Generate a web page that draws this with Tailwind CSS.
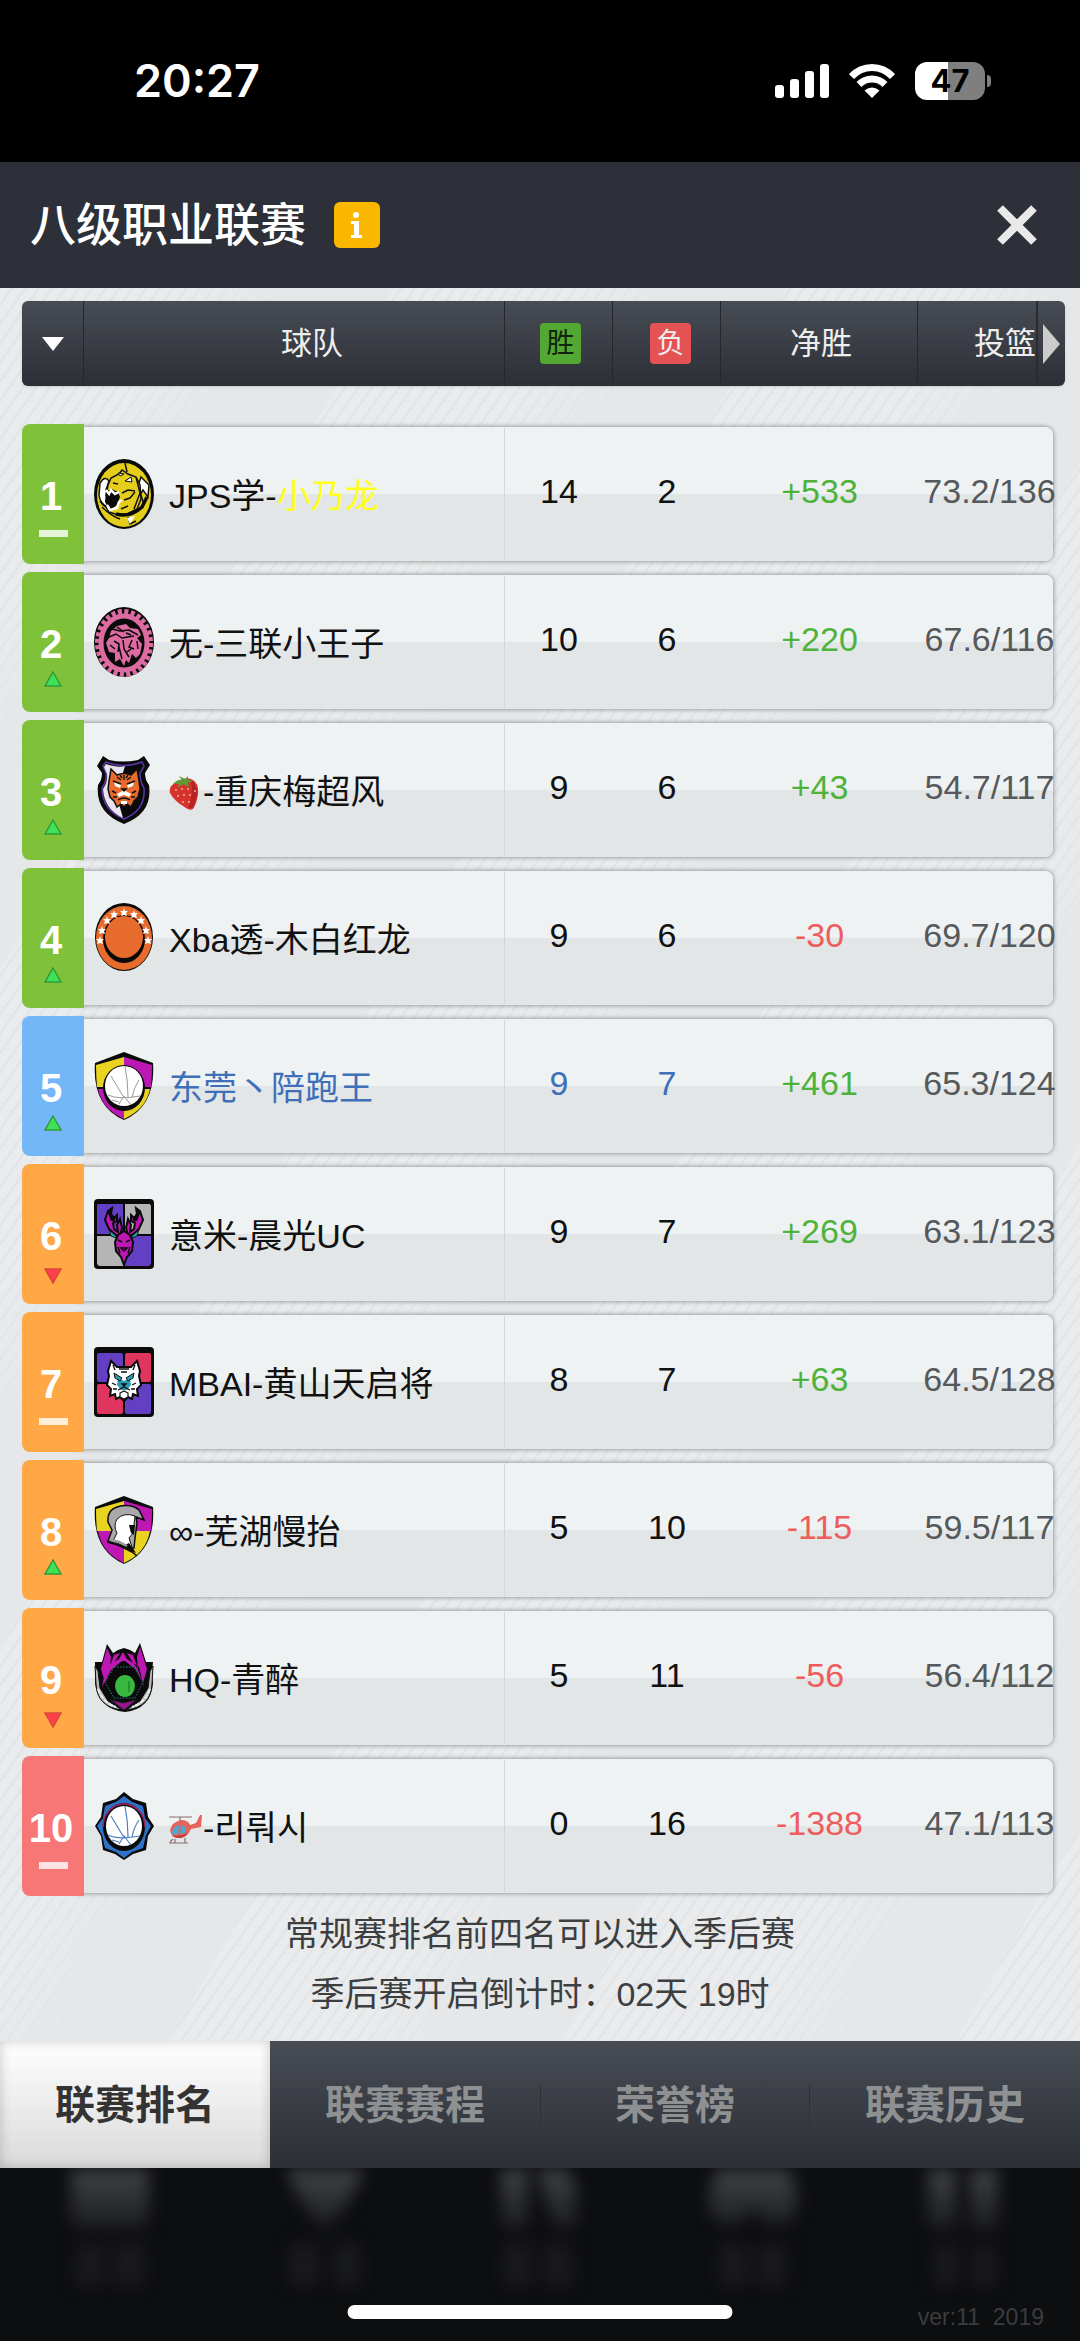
<!DOCTYPE html>
<html lang="zh-CN">
<head>
    <meta charset="UTF-8">
    <meta name="viewport" content="width=device-width, initial-scale=1.0">
    <script src="https://cdn.jsdelivr.net/npm/@tailwindcss/browser@4"></script>
    <title>八级职业联赛</title>
</head>
<body class="bg-black font-['Liberation_Sans','Noto_Sans_CJK_SC','Noto_Sans_CJK_KR',sans-serif]">

    <!-- Team logos -->
    <svg class="hidden" aria-hidden="true">
        <symbol id="logo-1" viewBox="0 0 60 70">
            <ellipse cx="30" cy="35" rx="30" ry="35" fill="#0a0a0a"/>
            <ellipse cx="30" cy="36" rx="27" ry="32" fill="#e5cd1c"/>
            <path d="M6 24q5-8 9-2l-3 9 5 9-3 8q-8-3-9-12z" fill="#fff" stroke="#111" stroke-width="1.5"/>
            <path d="M47 18l8 8-1 12-5-7-3 5-2-9z" fill="#fff" stroke="#111" stroke-width="1.5"/>
            <path d="M14 26l3-7 8-4 3-4 6 4 8 3 4 8 1 14-4 10-10 5-9 1-9-3-3-5 4-6-4-6z" fill="#e5cd1c" stroke="#111" stroke-width="1.5"/>
            <path d="M12 32l6-2 6 3 2 5-3 8-7 5-5-8z" fill="#0a0a0a"/>
            <path d="M12 31l3 4 2-4 4 4 4-2M13 46l3 5 7-2 2-6 3-2" fill="none" stroke="#fff" stroke-width="2.5"/>
            <path d="M28 34l6-3 7 1M30 41l6-2 5-6M42 18l4 16-6 16M31 4l2 9M47 36l3 10M24 25l-5-1M27 50l7-3" fill="none" stroke="#111" stroke-width="1.5"/>
            <path d="M31 22l6-4 1 5z M24 14l6 1-4 2z" fill="#fff" stroke="#111"/>
            <path d="M22 55q14 4 26-7l5-10" fill="none" stroke="#0a0a0a" stroke-width="3.5"/>
            <path d="M8 48q9 9 18 12M6 42q2 4 6 6M34 58l2 7 6-3" fill="none" stroke="#111" stroke-width="1.5"/>
            <path d="M33 59l8-2-5 8z" fill="#fff"/>
        </symbol>
        <symbol id="logo-2" viewBox="0 0 60 70">
            <ellipse cx="30" cy="35" rx="30" ry="35" fill="#0a0a0a"/>
            <ellipse cx="30" cy="36" rx="26" ry="31" fill="none" stroke="#dc6ba2" stroke-width="6" stroke-dasharray="4 2.4"/>
            <ellipse cx="30" cy="36" rx="23" ry="27" fill="none" stroke="#dc6ba2" stroke-width="5"/>
            <path d="M17 24l6-5 9-2 4 4 8 1 3 6-4 3 5 6-2 10-4 4-4-4-3 9-3-3-2 6-4-7-5 3 0-9-6-1-3-9 3-5z" fill="#dc6ba2"/>
            <path d="M18 22l8 2 9-1 9 5M15 30l7-3 6 4 12-2M20 34l5 3-1 8M29 33l1 9 5 8M25 40l3 12M38 33l-3 7 5 2M43 34l1 8M32 26l5 2M23 20l7 5M16 38l5 4M33 45l4-3" fill="none" stroke="#0a0a0a" stroke-width="1.5"/>
        </symbol>
        <symbol id="logo-3" viewBox="0 0 60 70">
            <path d="M9 1l6 4q14 3 29 0l6-4 6 9-5 8q0 7 4 12 4 28-25 39Q1 58 4 30q4-5 4-12l-5-7z" fill="#0a0a0a"/>
            <path d="M12 7q17 7 36 0l2 4-4 7q0 9 4 15 2 22-20 31Q8 55 8 33q5-7 4-15l-3-7z" fill="#0a0a0a" stroke="#5a36a8" stroke-width="1.5"/>
            <path d="M12 9q12 4 19 2l-3 10 3 22-6 6 4 14Q10 54 9 34q5-7 4-15l-3-7z" fill="#e8e4ef"/>
            <path d="M17 14l6 6q7-3 14 0l6-6 2 12 1 8-2 8-4 4-3 6-4-3-3 3-3-3-4 3-3-6-4-4-2-8 1-8z" fill="#e66b2c" stroke="#111" stroke-width="1.5"/>
            <path d="M20 27l7 3-1 3-5-2zM40 27l-7 3 1 3 5-2z" fill="#fff"/>
            <path d="M23 39l7-4 7 4-2 3-5-2-5 2zM27 46h6v3h-6z" fill="#fff"/>
            <path d="M28 34h4l-2 2zM18 36l4 2M42 36l-4 2M19 42l4 0M41 42l-4 0M23 22l4 3M37 22l-4 3M30 20v5M24 45q6-4 12 0M19 26l8 3M41 26l-8 3M26 20l2 3M34 20l-2 3" fill="none" stroke="#111" stroke-width="1.4"/>
        </symbol>
        <symbol id="logo-4" viewBox="0 0 60 70">
            <ellipse cx="30" cy="34" rx="29" ry="34" fill="#0a0a0a"/>
            <ellipse cx="30" cy="35" rx="28" ry="32" fill="#e66b2c"/>
            <ellipse cx="30" cy="36" rx="21" ry="24" fill="#0a0a0a"/>
            <ellipse cx="30" cy="34" rx="19" ry="21" fill="#e66b2c"/>
            <g fill="#fff">
                <path id="star" d="M20 7l1 3h3l-2 2 1 3-3-1-3 1 1-3-2-2h3z"/>
                <use href="#star" x="10" y="-2"/>
                <use href="#star" x="20"/><use href="#star" x="-7" y="6"/><use href="#star" x="27" y="6"/>
                <use href="#star" x="-12" y="16"/><use href="#star" x="32" y="16"/>
                <use href="#star" x="-14" y="26"/><use href="#star" x="34" y="26"/>
            </g>
        </symbol>
        <symbol id="logo-5" viewBox="0 0 60 70">
            <path d="M30 1l29 11q3 43-29 57Q-2 55 1 12z" fill="#0a0a0a"/>
            <path d="M30 6v30H3Q2 25 2 14z" fill="#e8d320"/>
            <path d="M30 6v30h27q1-11 1-22z" fill="#bd17b4"/>
            <path d="M4 38h26v30Q8 58 4 38" fill="#bd17b4"/>
            <path d="M56 38H30v30q22-10 26-30" fill="#e8d320"/>
            <ellipse cx="30" cy="37" rx="21" ry="23" fill="#0a0a0a"/>
            <ellipse cx="30" cy="35" rx="19" ry="20" fill="#fff"/>
            <path d="M31 15q3 15 3 31M17 25l12 20M45 29q-5 7-7 17M14 44q10 5 32 1M25 53l5-8 7 9M18 49l7 2" fill="none" stroke="#999"/>
        </symbol>
        <symbol id="logo-6" viewBox="0 0 60 70">
            <rect width="60" height="70" rx="4" fill="#0a0a0a"/>
            <path d="M4 5h25v30H3V6zM31 37h26v28l-2 2H31z" fill="#633fc4"/>
            <path d="M31 5h25l1 2v28H31zM3 37h26v30H5l-2-2z" fill="#b5b5b5"/>
            <path d="M15 30l8 4-1 5-5-2zM45 30l-8 4 1 5 5-2z" fill="#1fb0b5" stroke="#111"/>
            <path d="M24 38l-9-8-4-9 3-9 4-3-1 6 3 4 3-3v6l-4 2 1 6 4 3-1-7 3-6 2 9-1 4 3 2 3-2-1-4 2-9 3 6-1 7 4-3 1-6-4-2v-6l3 3 3-4-1-6 4 3 3 9-4 9-9 8" fill="#bd17b4" stroke="#0a0a0a" stroke-width="2"/>
            <path d="M15 11l3 9 3 1M45 11l-3 9-3 1" fill="none" stroke="#0a0a0a" stroke-width="3.500"/>
            <path d="M24 36l6-4 6 4 3 7-1 9-5 6-3 8-3-8-5-6-1-9z" fill="#bd17b4" stroke="#0a0a0a" stroke-width="2"/>
            <path d="M24 41l4 2M36 41l-4 2M27 49h6l-3 3zM24 48l2 6M36 48l-2 6" fill="none" stroke="#0a0a0a" stroke-width="1.5"/>
        </symbol>
        <symbol id="logo-7" viewBox="0 0 60 70">
            <rect width="60" height="70" rx="4" fill="#0a0a0a"/>
            <rect x="3" y="6" width="26" height="29" rx="2" fill="#633fc4"/>
            <rect x="31" y="37" width="26" height="30" rx="2" fill="#633fc4"/>
            <rect x="31" y="6" width="26" height="29" rx="2" fill="#e0355f"/>
            <rect x="3" y="37" width="26" height="30" rx="2" fill="#e0355f"/>
            <path d="M17 14l6 6h14l6-6 3 10-1 5 2 9-4 4 1 7-5-2-1 5-4-2-4 4-4-4-4 2-1-5-5 2 1-7-4-4 2-9-1-5z" fill="#fff" stroke="#0a0a0a" stroke-width="2"/>
            <path d="M24 31l6 3 6-3 1 7-4 5h-6l-4-5z" fill="#2a9bb3"/>
            <path d="M20 26l8 5-2 3-5-3zM40 26l-8 5 2 3 5-3z" fill="#2a9bb3" stroke="#111"/>
            <path d="M26 46l4-2 4 2v4l-4 2-4-2z" fill="#fff" stroke="#111" stroke-width="1.200"/>
            <path d="M24 43l6-3 6 3M18 36l4 2M42 36l-4 2M19 42l4 0M41 42l-4 0M25 22h10M27 25h6M19 18l2 5M41 18l-2 5M28 37h4l-2 2z" fill="none" stroke="#111" stroke-width="1.3"/>
        </symbol>
        <symbol id="logo-8" viewBox="0 0 60 70">
            <path d="M30 1l29 11q3 43-29 57Q-2 55 1 12z" fill="#0a0a0a"/>
            <path d="M30 6v30H3Q2 25 2 14z" fill="#e8d320"/>
            <path d="M30 6v30h27q1-11 1-22z" fill="#bd17b4"/>
            <path d="M4 36h26v32Q8 58 4 36" fill="#bd17b4"/>
            <path d="M56 36H30v32q22-10 26-32" fill="#e8d320"/>
            <path d="M50 25l-8-3 1 6-2 15-1 10-4 1-22-8 4-11-4-8q-1-12 9-15 14-4 22 3z" fill="#a9a9a9" stroke="#0a0a0a" stroke-width="1.5"/>
            <path d="M41 21q-11-4-18 3-4 7 0 14l-4 8 13 6 7 3-4-12 4-5z" fill="#fff" stroke="#111"/>
            <path d="M35 30h6l-1 10-3-2zM35 48l7 10-5-2-8-5z" fill="#0a0a0a"/>
            <path d="M13 47l11 3 14 7 5 4" fill="none" stroke="#0a0a0a" stroke-width="1.5"/>
            <path d="M17 45l8 2 8 4" fill="none" stroke="#999" stroke-width="2.5"/>
        </symbol>
        <symbol id="logo-9" viewBox="0 0 60 70">
            <path d="M1 19l7 0 5-18 6 9 5-3 6-2 6 2 5 3 5-10 6 19 7 0-1 11 1 10q-2 26-28 29Q4 66 1 40z" fill="#0a0a0a"/>
            <path d="M13 5l4 9-1 13-5 13-4-14zM46 4l-3 10 1 13 5 13 4-14zM29 9l4 7 12 8 5 20-8-17-11-9h-3l-11 9-9 17 4-20 13-8zM20 12l6-2-6 10-5 6zM39 12l-6-2 6 10 5 6z" fill="#bd17b4"/>
            <path d="M4 28l2 17 8 13 14 9Q3 64 2 41l-1-18zM56 28l-2 17-8 13-14 9Q57 64 58 41l1-18z" fill="#b9b9b9" stroke="#111"/>
            <path d="M4 46q5 14 18 18M56 46q-5 14-18 18" fill="none" stroke="#eee" stroke-width="2" stroke-dasharray="5 1"/>
            <path d="M20 24h20l9 15-8 16H20l-9-16z" fill="#0a0a0a" stroke="#24898a" stroke-dasharray="1.5 1.5"/>
            <ellipse cx="31" cy="43" rx="10" ry="11" fill="#38b83f"/>
            <path d="M35 38v11" stroke="#1d6b25"/>
            <path d="M17 57l12 3 13-3-12 10z" fill="#9b1593" stroke="#222"/>
        </symbol>
        <symbol id="logo-10" viewBox="0 0 60 70">
            <path d="M30 1l9 7 13 4 2 14 6 9-6 10-2 14-13 4-9 6-9-6-12-4-2-14-6-10 6-9 2-14 13-4z" fill="#0a0a0a"/>
            <path d="M30 5l8 6 11 4 2 12 6 8-5 9-3 13-11 4-8 6-8-6-11-4-3-13-5-9 6-8 2-12 11-4z" fill="#2f72c9"/>
            <ellipse cx="30" cy="36" rx="21" ry="24" fill="#0a0a0a"/>
            <path d="M9 36a21 23 0 0 1 42 0" fill="none" stroke="#9c2560" stroke-width="1.500"/>
            <ellipse cx="30" cy="35" rx="18" ry="20" fill="#fff"/>
            <path d="M31 15q3 15 3 31M17 25l12 20M45 29q-5 7-7 17M14 44q10 5 32 1M25 53l5-8 7 9M18 49l7 2" fill="none" stroke="#4d7fc2" stroke-width="1.2"/>
        </symbol>
        <symbol id="strawberry" viewBox="0 0 34 34">
            <path d="M9 5q9-5 15-1 6 4 5 14-1 9-5 15-3 2-7-1Q5 25 1 17-1 10 9 5" fill="#d8322f"/>
            <path d="M22 4q7 5 6 15l-4 13-5 0q6-14 3-28" fill="#b52325"/>
            <path d="M4 8q5-5 9-4l-3-4 6 3 3-3 0 4 6 0-6 3 1 4-6-3-5 4 1-4z" fill="#5f9a36"/>
            <g fill="#f3b08a"><circle cx="7" cy="14" r="1"/><circle cx="13" cy="13" r="1"/><circle cx="19" cy="13" r="1"/><circle cx="9" cy="20" r="1"/><circle cx="15" cy="19" r="1"/><circle cx="21" cy="19" r="1"/><circle cx="14" cy="26" r="1"/><circle cx="20" cy="26" r="1"/><circle cx="26" cy="15" r="1"/></g>
        </symbol>
        <symbol id="helicopter" viewBox="0 0 34 34">
            <path d="M0 5h23M11 5v4M4 27l-3 3M0 31h19M6 27v4M16 26v5" fill="none" stroke="#8b6a6c" stroke-width="1.2"/>
            <path d="M1 18q2-8 11-10 7 0 9 5l6-2 4-8h2l-1 12-10 2q-4 9-12 9-8 0-9-8" fill="#e5645c"/>
            <path d="M3 20q2-6 7-7l-1 9-5 1zM12 13l5 2-1 6-5 1z" fill="#49abd3"/>
            <path d="M3 23q7 2 16-2-3 5-9 5-5 0-7-3" fill="#c83b3b"/>
        </symbol>
    </svg>

    <!-- Status bar -->
    <div class="flex h-[162px] items-center justify-between pr-[89px] pl-[134px] text-white">
        <time class="font-['Inter',sans-serif] text-[45px] font-semibold">20:27</time>
        <div class="flex items-center gap-5">
            <svg class="h-9 w-[54px]" viewBox="0 0 54 36" fill="#fff" role="img" aria-label="信号">
                <rect y="22" width="9" height="13" rx="3"/><rect x="15" y="16" width="9" height="19" rx="3"/><rect x="30" y="8" width="9" height="27" rx="3"/><rect x="45" y="1" width="9" height="34" rx="3"/>
            </svg>
            <svg class="h-9 w-[46px]" viewBox="0 0 46 36" fill="none" stroke="#fff" stroke-width="7" role="img" aria-label="Wi-Fi">
                <path d="M2.500 13.500Q11 4.500 23 4.500t20.500 9"/><path d="M10 21.500q5.500-5.500 13-5.500t13 5.500"/>
                <path d="M15.500 27.500q7.500-6 15 0L23 35z" fill="#fff" stroke="none"/>
            </svg>
            <div class="flex items-center gap-0.5">
                <span class="flex h-[38px] w-[70px] items-center justify-center rounded-xl bg-linear-to-r from-white from-47% to-[#7f7f7f] to-47% font-['Inter',sans-serif] text-[31px] font-bold text-black">47</span>
                <span class="h-3 w-1 rounded-r-full bg-[#7f7f7f]"></span>
            </div>
        </div>
    </div>

    <!-- Title -->
    <header class="flex h-[126px] items-center bg-[#2d3038] pr-[43px] pl-[30px]">
        <h1 class="text-[46px] font-medium text-white">八级职业联赛</h1>
        <button type="button" aria-label="联赛说明" class="ml-7 flex h-[46px] w-[46px] items-center justify-center rounded-md bg-[#fab700]">
            <svg class="h-7 w-4" viewBox="0 0 16 28" fill="#fff"><circle cx="7" cy="4" r="3"/><path d="M2 10h8v14h3v3H2v-3h3V13H2z"/></svg>
        </button>
        <button type="button" aria-label="关闭" class="ml-auto">
            <svg class="h-10 w-10" viewBox="0 0 40 40" fill="none" stroke="#e9e9e9" stroke-width="8"><path d="M3 3l34 34M37 3L3 37"/></svg>
        </button>
    </header>

    <main class="relative overflow-hidden bg-[#e5e7e9]">
        <div class="absolute inset-0 bg-[repeating-linear-gradient(125deg,#ffffff30_0px,#ffffff30_8px,#d9dbdd30_9px,#d9dbdd30_11px)] mask-[repeating-linear-gradient(120deg,#000_0px,#000_150px,transparent_260px,transparent_340px,#000_341px)]"></div>
        <div class="relative pt-[13px] pr-[15px] pl-[22px]">
            <table class="block w-full text-[34px] leading-10">
                <thead class="block">
                    <tr class="grid h-[85px] grid-cols-[62fr_421fr_108fr_108fr_197fr_147fr] overflow-hidden rounded-md bg-linear-to-b from-[#484c54] to-[#2c2f36] text-[31px] text-[#eee] shadow">
                        <th class="flex items-center justify-center border-r border-[#24272d] font-normal">
                            <button type="button" aria-label="排序"><svg class="h-4 w-6" viewBox="0 0 24 16"><path d="M1 1h22L12 15z" fill="#fff"/></svg></button>
                        </th>
                        <th class="flex items-center justify-center border-r border-[#24272d] pl-9 font-normal">球队</th>
                        <th class="flex items-center justify-center border-r border-[#24272d] pl-1 font-normal"><span class="flex h-[41px] w-[41px] items-center justify-center rounded bg-[#52a833] text-[28px] text-[#12250b]">胜</span></th>
                        <th class="flex items-center justify-center border-r border-[#24272d] pl-2 font-normal"><span class="flex h-[41px] w-[41px] items-center justify-center rounded bg-[#e35353] text-[28px]">负</span></th>
                        <th class="flex items-center justify-center border-r border-[#24272d] pl-1 font-normal">净胜</th>
                        <th class="flex items-center justify-end font-normal">投篮
                            <button type="button" aria-label="更多列" class="flex h-full w-[29px] items-center justify-center border-l-2 border-[#292c32]"><svg class="h-10 w-5" viewBox="0 0 20 40"><path d="M1 0l17 20L1 40z" fill="#ccc"/></svg></button>
                        </th>
                    </tr>
                </thead>
                <tbody id="standings" class="flex flex-col gap-2 pt-[38px] pr-3"></tbody>
            </table>
        </div>
        <div class="relative pt-2 pb-[17px] text-center text-[34px] leading-[60px] text-[#3c3e40]">
            <p>常规赛排名前四名可以进入季后赛</p>
            <p>季后赛开启倒计时：02天 19时</p>
        </div>
    </main>

    <nav class="grid h-[127px] grid-cols-4 bg-linear-to-b from-[#484c54] to-[#2c2f36] pt-px text-[40px] font-bold text-[#8f9092]">
        <a href="#" aria-current="page" class="-mt-px flex items-center justify-center bg-linear-to-b from-white to-[#dadada] text-[#333] shadow-[inset_0_0_12px_#0003]">联赛排名</a>
        <a href="#" class="flex items-center justify-center">联赛赛程</a>
        <a href="#" class="flex items-center justify-center"><span class="w-full border-x border-[#2e3138] text-center leading-10">荣誉榜</span></a>
        <a href="#" class="flex items-center justify-center">联赛历史</a>
    </nav>

    <footer class="relative h-[173px] overflow-hidden bg-[#0d0e10]">
        <svg class="w-full blur-sm" viewBox="0 0 1080 173" aria-hidden="true">
            <defs><linearGradient id="fade" x2="0" y2="1"><stop offset=".3" stop-color="#3a3c3f"/><stop offset="1" stop-color="#1b1c1f"/></linearGradient></defs>
            <path fill="url(#fade)" d="M71-10h78v62q0 8-8 8H79q-8 0-8-8zM284-10h82q-6 36-41 72-35-36-41-72M500 4l12-14h16v70h-26zM534-10h26l16 26v44h-22zM714 8q6-18 39-18t39 18q14 40-10 49-17 4-29-19-12 23-29 19-24-9-10-49M928-10h28v70h-28zM970-10h28v70h-28z"/>
            <path fill="#191a1c" d="M76 76h28v42H76zM114 76h30v42h-30zM290 76h28v42h-28zM334 76h26v42h-26zM504 76h28v42h-28zM544 76h28v42h-28zM720 76h28v42h-28zM758 76h28v42h-28zM934 76h24v42h-24zM972 76h24v42h-24z"/>
        </svg>
        <div class="absolute bottom-[22px] left-1/2 h-[14px] w-[385px] -translate-x-1/2 rounded-full bg-white"></div>
        <p class="absolute right-9 bottom-2 text-[23px] leading-8 whitespace-pre text-[#3b3c3e]">ver:11  2019</p>
    </footer>

    <script>
        const emoji = (id, label) => `<svg class="inline-block h-[34px] w-[34px] align-[-6px]" role="img" aria-label="${label}"><use href="#${id}"/></svg>`;

        const moves = {
            same: '<span class="mt-[14px] h-[7px] w-[29px] bg-white/80"></span>',
            up: '<svg class="mt-[7px] h-4 w-5" viewBox="0 0 20 16"><path d="M10 1l8 14H2z" fill="#3fe257" stroke="#2f9c3a" stroke-width="1.5"/></svg>',
            down: '<svg class="mt-[12px] h-4 w-5" viewBox="0 0 20 16"><path d="M2 1h16l-8 14z" fill="#ff3f4b" stroke="#d9493a" stroke-width="1.5"/></svg>',
        };

        const GREEN = 'bg-[#7fc23a]', BLUE = 'bg-[#74b7f8]', ORANGE = 'bg-[#ffa845]', RED = 'bg-[#f77676]';

        // colour, move, team, wins, losses, net, shooting
        const teams = [
            [GREEN, 'same', 'JPS学-<span class="text-[#ffff1a]">小乃龙</span>', 14, 2, '+533', '73.2/136'],
            [GREEN, 'up', '无-三联小王子', 10, 6, '+220', '67.6/116'],
            [GREEN, 'up', emoji('strawberry', '草莓') + '-重庆梅超风', 9, 6, '+43', '54.7/117'],
            [GREEN, 'up', 'Xba透-木白红龙', 9, 6, '-30', '69.7/120'],
            [BLUE, 'up', '东莞丶陪跑王', 9, 7, '+461', '65.3/124'],
            [ORANGE, 'down', '意米-晨光UC', 9, 7, '+269', '63.1/123'],
            [ORANGE, 'same', 'MBAI-黄山天启将', 8, 7, '+63', '64.5/128'],
            [ORANGE, 'up', '∞-芜湖慢抬', 5, 10, '-115', '59.5/117'],
            [ORANGE, 'down', 'HQ-青醉', 5, 11, '-56', '56.4/112'],
            [RED, 'same', emoji('helicopter', '直升机') + '-리뤄시', 0, 16, '-1388', '47.1/113'],
        ];

        document.getElementById('standings').innerHTML = teams.map(([color, move, name, wins, losses, net, shots], i) => {
            const ink = color === BLUE ? 'text-[#3f6fb8]' : 'text-[#111]';
            const netInk = net[0] === '+' ? 'text-[#4fb23c]' : 'text-[#ee5d5d]';
            return `
                <tr class="relative isolate grid h-[140px] grid-cols-[62fr_421fr_108fr_108fr_197fr_minmax(0,135fr)] before:absolute before:inset-y-[3px] before:right-0 before:left-12 before:-z-10 before:rounded-lg before:bg-linear-to-b before:from-[#eef2f3] before:from-50% before:to-[#e2e6e7] before:to-50% before:shadow-[0_0_5px_#0007] ${ink}">
                    <td class="flex flex-col items-center rounded-l-lg pt-[52px] text-[40px] font-bold text-white ${color}"><span class="pr-1">${i + 1}</span>${moves[move]}</td>
                    <td class="my-1 flex items-center gap-[15px] border-r border-[#d3d7d8] pl-[10px] whitespace-nowrap">
                        <svg class="h-[70px] w-[60px] shrink-0"><use href="#logo-${i + 1}"/></svg>
                        <span class="pt-1">${name}</span>
                    </td>
                    <td class="flex items-center justify-center pb-1.5">${wins}</td>
                    <td class="flex items-center justify-center pb-1.5">${losses}</td>
                    <td class="flex items-center justify-center pb-1.5 ${netInk}">${net}</td>
                    <td class="flex items-center justify-center pb-1.5 pl-2 text-[#56595b]">${shots}</td>
                </tr>`;
        }).join('');
    </script>
</body>
</html>
